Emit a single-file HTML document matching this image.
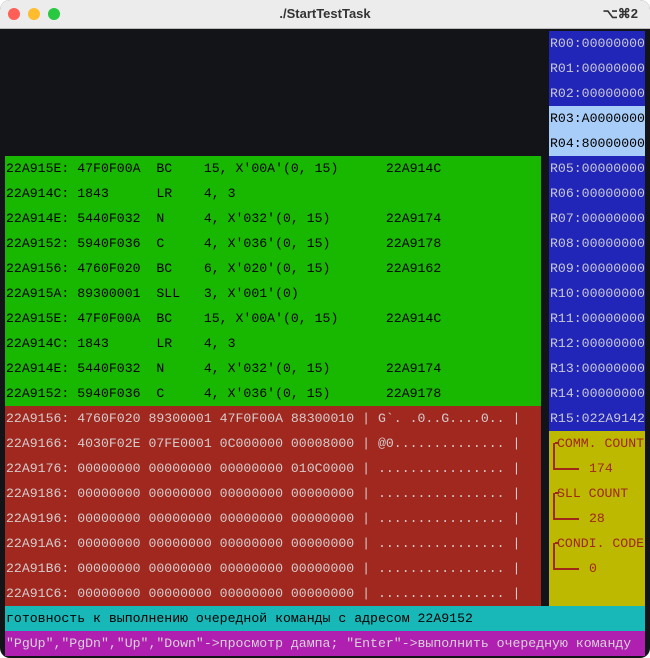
<!DOCTYPE html>
<html><head><meta charset="utf-8"><style>
*{margin:0;padding:0;box-sizing:border-box}
body{width:650px;height:658px;background:#fff;overflow:hidden;font-family:"Liberation Mono","DejaVu Sans Mono",monospace;font-size:13.2px}
.win{position:absolute;left:0;top:0;width:650px;height:658px;background:#121418;border-radius:10px;overflow:hidden}
.title{position:absolute;left:0;top:0;width:650px;height:29px;background:#ececec;border-bottom:1px solid #bbb;font-family:"Liberation Sans",sans-serif;font-weight:bold;font-size:13px;color:#333;text-align:center;line-height:28px}
.dot{position:absolute;top:8px;width:12px;height:12px;border-radius:50%}
.r{position:absolute;height:25px;line-height:26px;white-space:pre;overflow:hidden}
.g{background:#19b800;color:#000;left:5px;width:536px;padding-left:1px}
.rd{background:#a0281f;color:#d4cccc;left:5px;width:536px;padding-left:1px}
.b{background:#2226b8;color:#c8c8d4;left:549px;width:96px;padding-left:1px}
.lb{background:#a8cdf8;color:#000;left:549px;width:96px;padding-left:1px}
.y{position:absolute;left:549px;top:431px;width:96px;height:175px;background:#bdb800;color:#a02818}
.br{position:absolute;border-left:2px solid #a02818;border-bottom:2px solid #a02818;width:26px;height:27px}
.br:before{content:"";position:absolute;left:0;top:-1px;width:4px;height:2px;background:#a02818}
.yt{position:absolute;white-space:pre;line-height:26px}
</style></head><body><div class="win">
<div class="title">./StartTestTask<span style="position:absolute;right:12px;font-weight:bold">⌥⌘2</span>
<div class="dot" style="left:8px;background:#fe5f57"></div><div class="dot" style="left:28px;background:#febc2e"></div><div class="dot" style="left:48px;background:#28c840"></div></div>

<div class="r b" style="top:31px">R00:00000000</div>
<div class="r b" style="top:56px">R01:00000000</div>
<div class="r b" style="top:81px">R02:00000000</div>
<div class="r lb" style="top:106px">R03:A0000000</div>
<div class="r lb" style="top:131px">R04:80000000</div>
<div class="r b" style="top:156px">R05:00000000</div>
<div class="r b" style="top:181px">R06:00000000</div>
<div class="r b" style="top:206px">R07:00000000</div>
<div class="r b" style="top:231px">R08:00000000</div>
<div class="r b" style="top:256px">R09:00000000</div>
<div class="r b" style="top:281px">R10:00000000</div>
<div class="r b" style="top:306px">R11:00000000</div>
<div class="r b" style="top:331px">R12:00000000</div>
<div class="r b" style="top:356px">R13:00000000</div>
<div class="r b" style="top:381px">R14:00000000</div>
<div class="r b" style="top:406px">R15:022A9142</div>

<div class="r g" style="top:156px">22A915E: 47F0F00A  BC    15, X'00A'(0, 15)      22A914C</div>
<div class="r g" style="top:181px">22A914C: 1843      LR    4, 3</div>
<div class="r g" style="top:206px">22A914E: 5440F032  N     4, X'032'(0, 15)       22A9174</div>
<div class="r g" style="top:231px">22A9152: 5940F036  C     4, X'036'(0, 15)       22A9178</div>
<div class="r g" style="top:256px">22A9156: 4760F020  BC    6, X'020'(0, 15)       22A9162</div>
<div class="r g" style="top:281px">22A915A: 89300001  SLL   3, X'001'(0)</div>
<div class="r g" style="top:306px">22A915E: 47F0F00A  BC    15, X'00A'(0, 15)      22A914C</div>
<div class="r g" style="top:331px">22A914C: 1843      LR    4, 3</div>
<div class="r g" style="top:356px">22A914E: 5440F032  N     4, X'032'(0, 15)       22A9174</div>
<div class="r g" style="top:381px">22A9152: 5940F036  C     4, X'036'(0, 15)       22A9178</div>

<div class="r rd" style="top:406px">22A9156: 4760F020 89300001 47F0F00A 88300010 | G`. .0..G....0.. |</div>
<div class="r rd" style="top:431px">22A9166: 4030F02E 07FE0001 0C000000 00008000 | @0.............. |</div>
<div class="r rd" style="top:456px">22A9176: 00000000 00000000 00000000 010C0000 | ................ |</div>
<div class="r rd" style="top:481px">22A9186: 00000000 00000000 00000000 00000000 | ................ |</div>
<div class="r rd" style="top:506px">22A9196: 00000000 00000000 00000000 00000000 | ................ |</div>
<div class="r rd" style="top:531px">22A91A6: 00000000 00000000 00000000 00000000 | ................ |</div>
<div class="r rd" style="top:556px">22A91B6: 00000000 00000000 00000000 00000000 | ................ |</div>
<div class="r rd" style="top:581px">22A91C6: 00000000 00000000 00000000 00000000 | ................ |</div>

<div class="y">
<div class="br" style="left:4px;top:12px"></div><div class="yt" style="left:8px;top:0">COMM. COUNT</div><div class="yt" style="left:40px;top:25px">174</div>
<div class="br" style="left:4px;top:62px"></div><div class="yt" style="left:8px;top:50px">SLL COUNT</div><div class="yt" style="left:40px;top:75px">28</div>
<div class="br" style="left:4px;top:112px"></div><div class="yt" style="left:8px;top:100px">CONDI. CODE</div><div class="yt" style="left:40px;top:125px">0</div>
</div>

<div class="r" style="top:606px;left:5px;width:640px;background:#18b8b8;color:#000;padding-left:1px">готовность к выполнению очередной команды с адресом 22A9152</div>
<div class="r" style="top:631px;left:5px;width:640px;background:#b020b0;color:#d8d0d8;padding-left:1px">"PgUp","PgDn","Up","Down"->просмотр дампа; "Enter"->выполнить очередную команду</div>
</div></body></html>
